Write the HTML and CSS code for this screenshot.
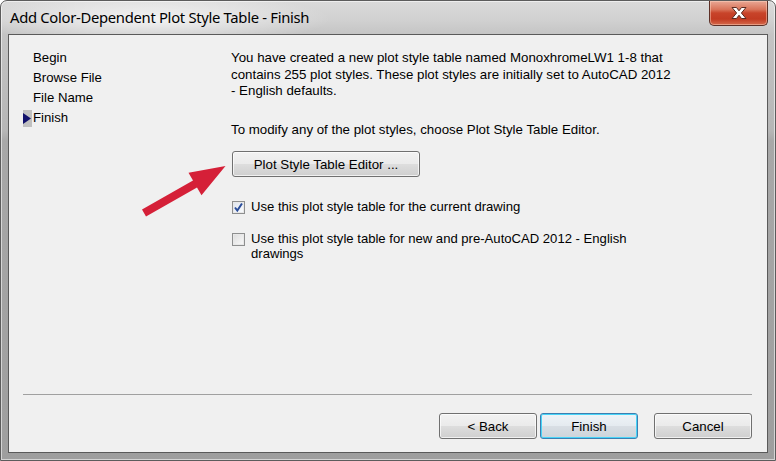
FILE: index.html
```html
<!DOCTYPE html>
<html>
<head>
<meta charset="utf-8">
<link rel="stylesheet" href="styles.css">
</head>
<body>
<div class="window">
  <div class="titlebar">
    <div class="title">Add Color-Dependent Plot Style Table - Finish</div>
    <div class="close">
      <svg width="22" height="14" viewBox="0 0 22 14">
        <path d="M4 1.5 L8.5 1.5 L11 4.8 L13.5 1.5 L18 1.5 L13.4 7 L18 12.5 L13.5 12.5 L11 9.2 L8.5 12.5 L4 12.5 L8.6 7 Z" fill="#fff" stroke="#5a2a20" stroke-width="1" stroke-linejoin="round"/>
      </svg>
    </div>
  </div>
  <div class="client">
    <div class="content">
      <ul class="nav">
        <li><span class="mark"></span>Begin</li>
        <li><span class="mark"></span>Browse File</li>
        <li><span class="mark"></span>File Name</li>
        <li class="current"><span class="mark"><svg width="8" height="11" viewBox="0 0 8 11"><path d="M0 0 L8 5.5 L0 11 Z" fill="#10106a"/></svg></span>Finish</li>
      </ul>
      <div class="main">
        <p class="msg">You have created a new plot style table named MonoxhromeLW1 1-8 that<br>contains 255 plot styles. These plot styles are initially set to AutoCAD 2012<br>- English defaults.</p>
        <p class="msg">To modify any of the plot styles, choose Plot Style Table Editor.</p>
        <button class="btn editor">Plot Style Table Editor ...</button>
        <label class="check first"><span class="box checked"><svg width="11" height="11" viewBox="0 0 11 11"><path d="M2 5.5 L4.3 8.5 L9 1.5" fill="none" stroke="#2a4d9a" stroke-width="2"/></svg></span><span>Use this plot style table for the current drawing</span></label>
        <label class="check second"><span class="box"></span><span>Use this plot style table for new and pre-AutoCAD 2012 - English<br>drawings</span></label>
      </div>
    </div>
    <div class="footer">
      <div class="sep"></div>
      <div class="buttons">
        <button class="btn">&lt; Back</button>
        <button class="btn default">Finish</button>
        <button class="btn cancel">Cancel</button>
      </div>
    </div>
  </div>
  <svg class="annot" width="776" height="461" viewBox="0 0 776 461">
    <polygon points="142,209.5 193,180.5 188.5,172.7 225.5,166 201.5,195.3 197,187.5 146,216.5" fill="#d52038"/>
  </svg>
</div>
</body>
</html>
```
FILE: styles.css
```css
* { box-sizing: border-box; }
html, body { margin: 0; padding: 0; }
body {
  width: 776px;
  height: 461px;
  overflow: hidden;
  background: #fff;
  font-family: "Liberation Sans", Arial, sans-serif;
  font-size: 13.3px;
  color: #000;
}
.window {
  position: relative;
  width: 776px;
  height: 461px;
  border: 1px solid #5c5c5c;
  border-radius: 7px 7px 0 0;
  background:
    radial-gradient(ellipse 180px 26px at 150px 18px, rgba(255,255,255,0.75), rgba(255,255,255,0) 100%),
    linear-gradient(to bottom, #dadada 0px, #d0d0d0 20px, #c4c4c4 34px, #b6b6b6 130px, #a8a8a8 140px, #9e9e9e 461px);
  box-shadow: inset 0 0 0 1px rgba(255,255,255,0.55);
  display: flex;
  flex-direction: column;
}
.titlebar {
  height: 33px;
  display: flex;
  align-items: flex-start;
  justify-content: space-between;
  padding-left: 9px;
  flex-shrink: 0;
}
.title {
  font-family: "Noto Sans", "Open Sans", sans-serif;
  font-size: 14.8px;
  letter-spacing: -0.3px;
  color: #000;
  padding-top: 6px;
}
.close {
  width: 59px;
  height: 25px;
  margin-right: 7px;
  border: 1px solid #5d3027;
  border-top: none;
  border-radius: 0 0 5px 5px;
  background: linear-gradient(to bottom, #e9a895 0%, #d9745a 35%, #c8442a 50%, #c23b22 75%, #d56a4c 100%);
  box-shadow: inset 0 0 0 1px rgba(255,220,200,0.45);
  display: flex;
  align-items: center;
  justify-content: center;
}
.client {
  flex: 1;
  margin: 0 7px 7px 7px;
  border: 1px solid #5a5a5a;
  background: #f0f0f0;
  display: flex;
  flex-direction: column;
}
.content {
  flex: 1;
  display: flex;
}
.nav {
  list-style: none;
  margin: 0;
  padding: 13px 0 0 14px;
  width: 222px;
  font-size: 13.2px;
}
.nav li {
  height: 20px;
  line-height: 20px;
  display: flex;
  align-items: center;
}
.mark {
  width: 10px;
  height: 17px;
  display: flex;
  align-items: center;
  justify-content: flex-start;
  flex-shrink: 0;
}
.current .mark { background: #c0c0c0; width: 9px; margin-right: 1px; }
.main {
  padding-top: 15px;
  display: flex;
  flex-direction: column;
  align-items: flex-start;
}
.msg {
  margin: 0 0 22px 0;
  line-height: 16.5px;
  white-space: nowrap;
}
.msg + .msg { margin-bottom: 0; }
.btn {
  font-family: "Liberation Sans", Arial, sans-serif;
  font-size: 13.3px;
  color: #000;
  height: 26px;
  border: 1px solid #707070;
  border-radius: 3px;
  background: linear-gradient(to bottom, #f2f2f2 0%, #ebebeb 48%, #dddddd 52%, #cfcfcf 100%);
  box-shadow: inset 0 0 0 1px rgba(255,255,255,0.7);
  padding: 0;
}
.editor {
  width: 188px;
  margin: 13px 0 0 1px;
}
.check {
  display: flex;
  align-items: flex-start;
  line-height: 15.5px;
  font-size: 13.1px;
}
.check.first { margin-top: 22px; }
.check.second { margin-top: 16px; }
.box {
  width: 13px;
  height: 13px;
  margin: 2px 6px 0 1px;
  border: 1px solid #8e8f8f;
  background: linear-gradient(135deg, #dcdcdc 0%, #f4f4f4 80%);
  box-shadow: inset 0 0 0 1px #e8e8e8;
  display: flex;
  align-items: center;
  justify-content: center;
  flex-shrink: 0;
}
.box.checked { background: linear-gradient(135deg, #dde3ee 0%, #f6f8fb 80%); }
.footer {
  flex-shrink: 0;
  height: 58px;
}
.sep {
  height: 1px;
  margin: 0 15px 0 14px;
  background: #a0a0a0;
}
.buttons {
  display: flex;
  justify-content: flex-end;
  padding: 18px 15px 0 0;
}
.buttons .btn { width: 98px; }
.buttons .btn + .btn { margin-left: 3px; }
.buttons .btn.cancel { margin-left: 16px; }
.btn.default {
  border-color: #3c7fb1;
  box-shadow: inset 0 0 0 1px #48d4f8;
  background: linear-gradient(to bottom, #eef3f7 0%, #e5ebf0 48%, #d8dee4 52%, #cdd4da 100%);
}
.annot {
  position: absolute;
  left: -1px;
  top: -1px;
  pointer-events: none;
}
```
